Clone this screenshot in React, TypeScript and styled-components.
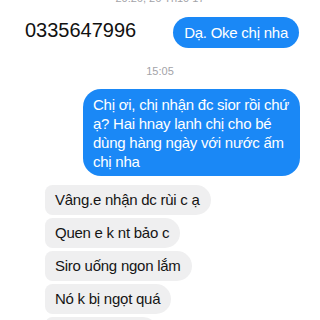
import styled, { createGlobalStyle } from "styled-components";

const GlobalStyle = createGlobalStyle`
    html, body {
        margin: 0;
        padding: 0;
        background: #ffffff;
        overflow: hidden;
    }
`;

const palette = {
    blue: "#1a88f6",
    grey: "#efeff0",
    stamp: "#a3a3a8",
    text: "#151515",
};

const Thread = styled.div`
    width: 320px;
    height: 320px;
    overflow: hidden;
    display: flex;
    flex-direction: column;
    font-family: "Liberation Sans", Arial, sans-serif;
    background: #ffffff;
`;

const Stamp = styled.div<{ $cut?: boolean }>`
    text-align: center;
    font-size: 11px;
    line-height: 14px;
    color: ${palette.stamp};
    margin-top: ${(p) => (p.$cut ? "-9px" : "16px")};
    margin-bottom: ${(p) => (p.$cut ? "0" : "11px")};
`;

const TopRow = styled.div`
    display: flex;
    align-items: center;
    justify-content: space-between;
    padding: 12px 21px 0 25px;
`;

const Phone = styled.div`
    font-size: 20px;
    color: #111111;
    margin-top: -4px;
`;

const Row = styled.div<{ $mine?: boolean }>`
    display: flex;
    justify-content: ${(p) => (p.$mine ? "flex-end" : "flex-start")};
    padding: ${(p) => (p.$mine ? "0 20px 0 0" : "0 0 0 45px")};
`;

const Bubble = styled.div<{ $mine?: boolean; $width?: number }>`
    box-sizing: border-box;
    font-size: 15px;
    letter-spacing: -0.25px;
    line-height: 19px;
    color: ${(p) => (p.$mine ? "#ffffff" : palette.text)};
    background: ${(p) => (p.$mine ? palette.blue : palette.grey)};
    width: ${(p) => (p.$width ? `${p.$width}px` : "auto")};
`;

const Pill = styled(Bubble)`
    padding: 6px 11px 6px 11px;
    border-radius: 16px;
`;

const Block = styled(Bubble)`
    padding: 6px 8px 5px 10px;
    border-radius: 18px;
`;

const Received = styled(Bubble)`
    height: 30px;
    padding: 5px 11px 0 10px;
    border-radius: 8px 16px 16px 8px;
`;

const Group = styled.div`
    display: flex;
    flex-direction: column;
    gap: 3px;
    margin-top: 9px;
`;

const received = ["Vâng.e nhận dc rùi c ạ", "Quen e k nt bảo c", "Siro uống ngon lắm", "Nó k bị ngọt quá", "Cảm ơn c nha"];

export default function App() {
    return (
        <Thread>
            <GlobalStyle />
            <Stamp $cut>20:26, 26 Th10 17</Stamp>
            <TopRow>
                <Phone>0335647996</Phone>
                <Pill $mine>Dạ. Oke chị nha</Pill>
            </TopRow>
            <Stamp>15:05</Stamp>
            <Row $mine>
                <Block $mine $width={217}>
                    Chị ơi, chị nhận đc sỉor rồi chứ ạ? Hai hnay lạnh chị cho bé dùng hàng ngày với nước ấm chị nha
                </Block>
            </Row>
            <Group>
                {received.map((msg) => (
                    <Row key={msg}>
                        <Received>{msg}</Received>
                    </Row>
                ))}
            </Group>
        </Thread>
    );
}
